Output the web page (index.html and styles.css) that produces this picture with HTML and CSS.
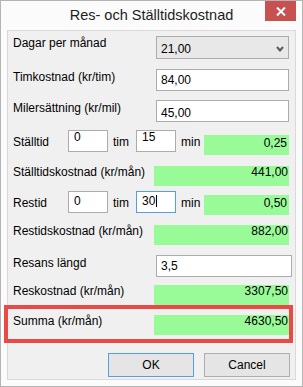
FILE: index.html
```html
<!DOCTYPE html>
<html lang="sv">
<head>
    <meta charset="UTF-8">
    <meta name="viewport" content="width=device-width, initial-scale=1.0">
    <title>Res- och Ställtidskostnad</title>
    <link rel="stylesheet" href="styles.css">
</head>
<body>
    <div class="window">
        <div class="titlebar">Res- och Ställtidskostnad</div>
        <button class="close" title="Stäng">
            <svg width="10" height="9" viewBox="0 0 10 9">
                <path d="M1 0.5 L9 8.5 M9 0.5 L1 8.5" stroke="#fff" stroke-width="2"/>
            </svg>
        </button>

        <div class="panel">
            <div class="row">
                <span class="label">Dagar per månad</span>
                <div class="combo">
                    <span>21,00</span>
                    <svg class="chevron" width="8" height="6" viewBox="0 0 8 6">
                        <path d="M1 1 L4 4.5 L7 1" stroke="#5a5a5a" stroke-width="2" fill="none"/>
                    </svg>
                </div>
            </div>

            <div class="row">
                <span class="label">Timkostnad (kr/tim)</span>
                <div class="field">84,00</div>
            </div>

            <div class="row">
                <span class="label">Milersättning (kr/mil)</span>
                <div class="field field-low">45,00</div>
            </div>

            <div class="row">
                <span class="label label-time">Ställtid</span>
                <div class="field small">0</div>
                <span class="unit">tim</span>
                <div class="field small">15</div>
                <span class="unit">min</span>
                <div class="result result-time">0,25</div>
            </div>

            <div class="row">
                <span class="label label-result">Ställtidskostnad (kr/mån)</span>
                <div class="result">441,00</div>
            </div>

            <div class="row">
                <span class="label label-time">Restid</span>
                <div class="field small small-low">0</div>
                <span class="unit">tim</span>
                <div class="field small small-low focused">30<span class="caret"></span></div>
                <span class="unit">min</span>
                <div class="result result-time result-time-up">0,50</div>
            </div>

            <div class="row">
                <span class="label label-result">Restidskostnad (kr/mån)</span>
                <div class="result">882,00</div>
            </div>

            <div class="row">
                <span class="label">Resans längd</span>
                <div class="field field-wide">3,5</div>
            </div>

            <div class="row">
                <span class="label label-result">Reskostnad (kr/mån)</span>
                <div class="result">3307,50</div>
            </div>

            <div class="row">
                <span class="label label-result">Summa (kr/mån)</span>
                <div class="result">4630,50</div>
            </div>

            <div class="buttons">
                <button class="btn btn-default">OK</button>
                <button class="btn">Cancel</button>
            </div>
        </div>

        <div class="highlight"></div>
    </div>
</body>
</html>
```

FILE: styles.css
```css
body {
    margin: 0;
    font-family: "Liberation Sans", Arial, sans-serif;
    font-size: 12px;
    color: #000;
}

.window {
    position: relative;
    width: 303px;
    height: 387px;
    box-sizing: border-box;
    border: 1px solid #b4b4b4;
    background-color: #fbfbfb;
    padding: 0 6px 6px 6px;
}

.titlebar {
    height: 29px;
    line-height: 28px;
    text-align: center;
    font-size: 14.5px;
    color: #1e1e1e;
}

.close {
    position: absolute;
    top: 0;
    right: 6px;
    width: 31px;
    height: 20px;
    border: none;
    padding: 0;
    background-color: #c75050;
    display: flex;
    align-items: center;
    justify-content: center;
}

.panel {
    height: 350px;
    box-sizing: border-box;
    border: 1px solid #d9d9d9;
    background-color: #f0f0f0;
    padding: 4px 0 0 5px;
    display: grid;
    grid-template-rows: 34px 31px 30px 34px 27px 32px 32px 28px 30px 40px 24px;
}

.row {
    display: flex;
    align-items: flex-start;
}

.label {
    width: 143px;
    line-height: 16px;
    white-space: nowrap;
}

.label-result {
    width: 141px;
}

.label-time {
    width: 55px;
    margin-top: 4px;
}

.combo {
    width: 133px;
    height: 23px;
    box-sizing: border-box;
    margin-top: 1px;
    border: 1px solid #acacac;
    background-color: #e8e8e8;
    padding: 4px 0 0 4px;
    line-height: 16px;
    display: flex;
    justify-content: space-between;
}

.chevron {
    margin: 5px 4px 0 0;
}

.field {
    width: 133px;
    height: 22px;
    box-sizing: border-box;
    border: 1px solid #acacac;
    background-color: #fff;
    padding: 2px 0 0 4px;
    line-height: 16px;
}

.field-low {
    padding-top: 4px;
}

.field-wide {
    width: 136px;
}

.field.small {
    width: 40px;
    padding: 0 0 0 5px;
    line-height: 12px;
}

.field.small-low {
    padding-top: 3px;
}

.field.focused {
    border-color: #569de5;
}

.caret {
    display: inline-block;
    width: 1px;
    height: 12px;
    margin-left: 1px;
    vertical-align: -2px;
    background-color: #000;
}

.unit {
    width: 23px;
    margin: 4px 0 0 5px;
    line-height: 16px;
}

.result {
    width: 135px;
    height: 20px;
    box-sizing: border-box;
    margin-top: 2px;
    background-color: #98fb98;
    padding-right: 1px;
    text-align: right;
    line-height: 12px;
}

.result-time {
    width: 85px;
    margin-top: 5px;
    padding: 2px 2px 0 0;
}

.result-time-up {
    margin-top: 4px;
}

.buttons {
    display: flex;
    gap: 10px;
    padding-left: 95px;
}

.btn {
    width: 86px;
    height: 24px;
    border: 1px solid #adadad;
    background-color: #e5e5e5;
    font-family: "Liberation Sans", Arial, sans-serif;
    font-size: 12px;
    color: #000;
    padding: 0;
}

.btn-default {
    border-color: #569de5;
}

.highlight {
    position: absolute;
    left: 3px;
    top: 304px;
    width: 289px;
    height: 38px;
    box-sizing: border-box;
    border: 4px solid #e84a45;
    pointer-events: none;
}
```
